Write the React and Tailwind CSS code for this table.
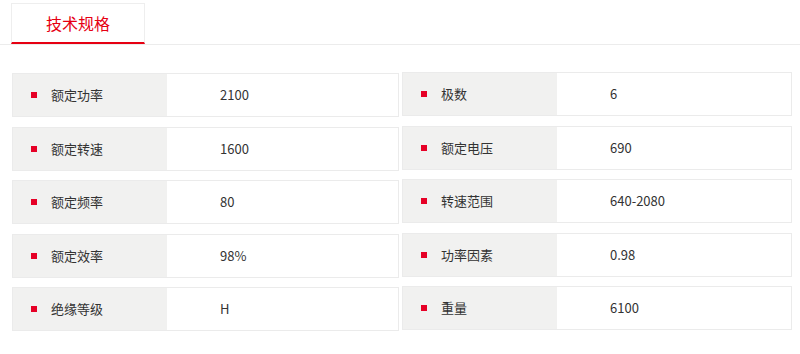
import React from "react";

const left = [
  ["额定功率", "2100"],
  ["额定转速", "1600"],
  ["额定频率", "80"],
  ["额定效率", "98%"],
  ["绝缘等级", "H"],
];

const right = [
  ["极数", "6"],
  ["额定电压", "690"],
  ["转速范围", "640-2080"],
  ["功率因素", "0.98"],
  ["重量", "6100"],
];

const SpecRow = ({ label, value }) => (
  <div className="flex h-[44px] border border-[#ebebeb] bg-white">
    {/* 标签 */}
    <div className="flex w-[154px] shrink-0 items-center bg-[#f1f1f0] pl-[18px]">
      <span className="h-[6px] w-[6px] bg-[#e60026]" />
      <span className="ml-[14px] text-[13px] text-[#333]">{label}</span>
    </div>
    {/* 数值 */}
    <div className="flex items-center pl-[53px] text-[13px] text-[#333]">{value}</div>
  </div>
);

export default function App() {
  return (
    <div
      className="h-[354px] w-[800px] bg-white pt-[3px]"
      style={{ fontFamily: '"Noto Sans CJK SC", "Noto Sans", sans-serif' }}
    >
      {/* 选项卡 */}
      <div className="flex border-b border-[#ececec]">
        <div className="ml-[11px] flex h-[41px] w-[134px] items-center justify-center border border-b-2 border-[#eeeeee] border-b-[#e60012] text-[16px] text-[#e60012]">
          技术规格
        </div>
      </div>

      {/* 参数表 */}
      <div className="mt-[28px] grid grid-cols-[387px_390px] gap-x-[3px] pl-[12px]">
        <div className="flex flex-col gap-y-[9.5px]">
          {left.map(([l, v]) => (
            <SpecRow key={l} label={l} value={v} />
          ))}
        </div>
        <div className="flex flex-col gap-y-[9.5px] -mt-[1px]">
          {right.map(([l, v]) => (
            <SpecRow key={l} label={l} value={v} />
          ))}
        </div>
      </div>
    </div>
  );
}
